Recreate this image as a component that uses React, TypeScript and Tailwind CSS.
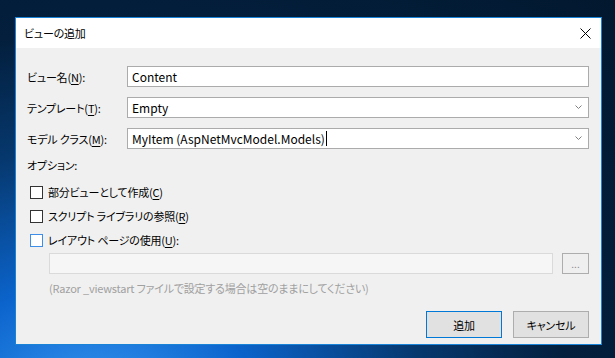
import React from 'react';

const FONT = "font-['Noto_Sans_CJK_JP',sans-serif] [font-feature-settings:'palt']";
const TXT = 'text-[11px] leading-[16px] tracking-[-0.2px]';

function Chevron() {
  return (
    <svg width="7" height="5" viewBox="0 0 7 5" className="flex-none">
      <polyline points="0.5,0.5 3.5,3.5 6.5,0.5" fill="none" stroke="#808080" strokeWidth="1" />
    </svg>
  );
}

function Field({ label, k, value, combo, caret }: { label: string; k: string; value: string; combo?: boolean; caret?: boolean }) {
  return (
    <div className="flex items-center h-[21px]">
      <div className={`w-[100px] flex-none ${TXT} text-black`}>
        {label}(<span className="underline underline-offset-2">{k}</span>):
      </div>
      <div className="flex-1 h-[21px] border border-[#ababab] bg-white flex items-center pl-[4px] pr-[6px]">
        <span className={`${TXT} text-[12px] tracking-normal text-black whitespace-nowrap`}>{value}</span>
        {caret && <span className="w-px h-[15px] bg-black ml-px" />}
        <div className="flex-1" />
        {combo && <Chevron />}
      </div>
    </div>
  );
}

function Check({ label, k, focus }: { label: string; k: string; focus?: boolean }) {
  return (
    <div className="flex items-center h-[24px] gap-[5px] pl-[3px]">
      <div className={`w-[13px] h-[13px] bg-white border ${focus ? 'border-[#3d8ee8]' : 'border-[#333333]'}`} />
      <span className={`${TXT} text-black`}>
        {label}(<span className="underline underline-offset-2">{k}</span>)
        {focus ? ':' : ''}
      </span>
    </div>
  );
}

export default function App() {
  return (
    <div className={`w-[615px] h-[358px] overflow-hidden pt-[17px] pl-[15px] bg-[radial-gradient(ellipse_at_15%_115%,#3a9af5_0%,#0b64cc_22%,#06386e_45%,#031f3d_65%,#02182f_100%)] ${FONT}`}>
      <div className="w-[587px] h-[328px] border border-[#1883d7] bg-[#f0f0f0] flex flex-col">
        {/* title bar */}
        <div className="h-[30px] bg-white flex items-center pl-[8px] pr-[10px]">
          <span className={`${TXT} text-black`}>ビューの追加</span>
          <div className="flex-1" />
          <svg width="11" height="11" viewBox="0 0 11 11">
            <path d="M0.5 0.5 L10.5 10.5 M10.5 0.5 L0.5 10.5" stroke="#000" strokeWidth="1" />
          </svg>
        </div>

        {/* body */}
        <div className="flex-1 flex flex-col pt-[18px] pl-[11px] pr-[12px] pb-[6px]">
          <div className="flex flex-col gap-[10px]">
            <Field label="ビュー名" k="N" value="Content" />
            <Field label="テンプレート" k="T" value="Empty" combo />
            <Field label="モデル クラス" k="M" value="MyItem (AspNetMvcModel.Models)" combo caret />
          </div>

          <div className={`mt-[8px] ${TXT} text-black`}>オプション:</div>

          <div className="mt-[7px] flex flex-col">
            <Check label="部分ビューとして作成" k="C" />
            <Check label="スクリプト ライブラリの参照" k="R" />
            <Check label="レイアウト ページの使用" k="U" focus />
          </div>

          <div className="mt-px ml-[22px] flex items-center gap-[9px]">
            <div className="flex-1 h-[21px] border border-[#dadada] bg-[#f6f6f6]" />
            <div className="w-[27px] h-[21px] flex-none border border-[#adadad] bg-[#efefef] flex items-center justify-center text-[10px] leading-[10px] text-[#8a8a8a]">
              ...
            </div>
          </div>

          <div className={`mt-[6px] ml-[22px] ${TXT} text-[#a0a0a0] whitespace-nowrap`}>
            (Razor _viewstart ファイルで設定する場合は空のままにしてください)
          </div>

          <div className="mt-auto flex justify-end gap-[11px]">
            <button className={`w-[76px] h-[27px] border border-[#0078d7] bg-[#e1e1e1] ${TXT} text-black`}>
              追加
            </button>
            <button className={`w-[76px] h-[27px] border border-[#adadad] bg-[#e1e1e1] ${TXT} text-black`}>
              キャンセル
            </button>
          </div>
        </div>
      </div>
    </div>
  );
}
